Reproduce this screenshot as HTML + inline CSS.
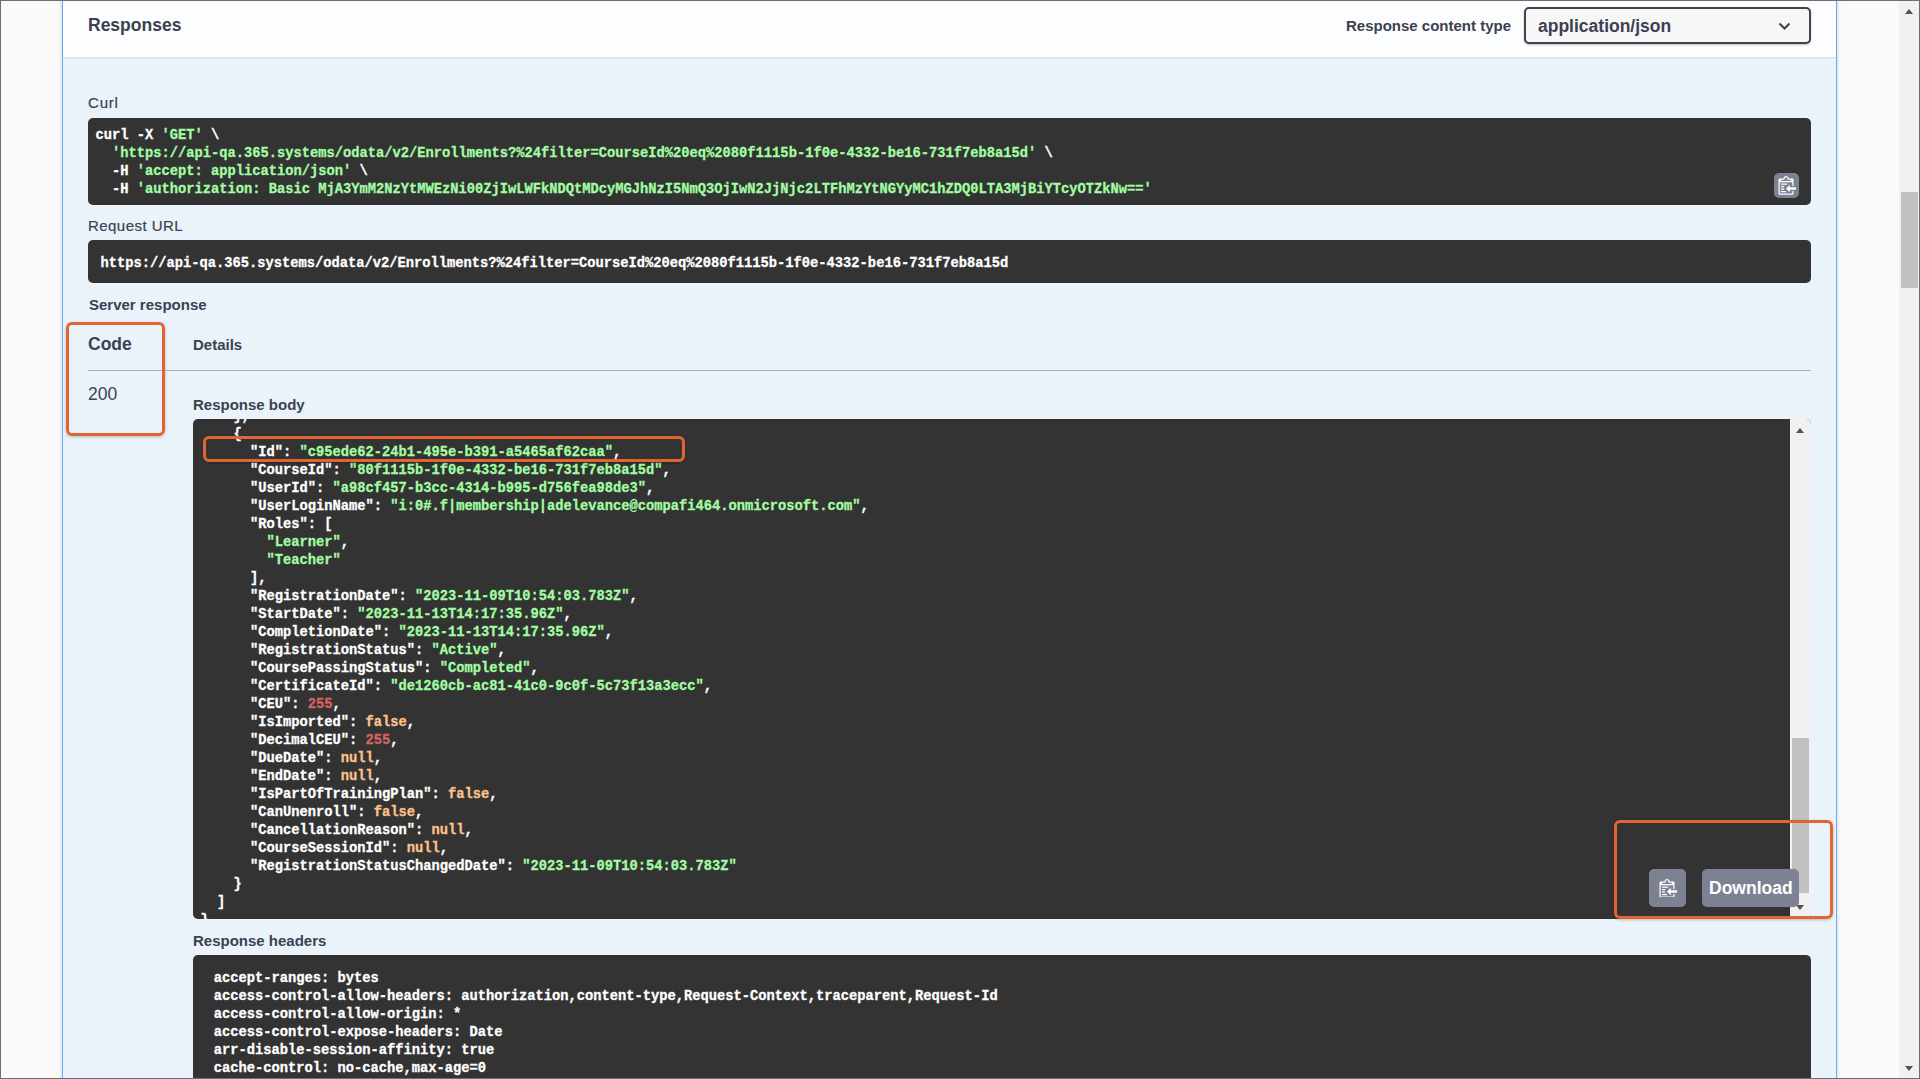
<!DOCTYPE html>
<html><head><meta charset="utf-8">
<style>
html,body{margin:0;padding:0;}
body{width:1920px;height:1079px;overflow:hidden;background:#fafafa;position:relative;font-family:"Liberation Sans",sans-serif;color:#3b4151;}
.abs{position:absolute;}
.frame{position:absolute;left:0;top:0;width:1920px;height:1079px;box-sizing:border-box;border:1px solid #6e6e6e;z-index:100;pointer-events:none;}
.opblock{position:absolute;left:62px;top:-20px;width:1773px;height:1200px;border:1px solid #61affe;background:#ebf3fa;box-shadow:0 0 3.75px rgba(0,0,0,.19);}
.hdr{position:absolute;left:63px;top:0;width:1773px;height:57px;background:#fbfdfe;box-shadow:0 1px 2px rgba(0,0,0,.1);}
.t{position:absolute;white-space:pre;line-height:0;}
.pre{position:absolute;background:#333;border-radius:5px;}
.mono{font-family:"Liberation Mono",monospace;font-weight:bold;font-size:13.75px;white-space:pre;color:#fff;-webkit-text-stroke:0.3px currentColor;}
.g{color:#a2fca2;}
.r{color:#d36363;}
.y{color:#fcc28c;}
.btn{position:absolute;background:#7d8293;border-radius:5px;}
.orange{position:absolute;box-sizing:border-box;border:3px solid #e26333;border-radius:6px;box-shadow:0 1px 3px rgba(0,0,0,.25);}
.sb{position:absolute;background:#f1f1f1;}
.thumb{position:absolute;background:#c1c1c1;}
.tri-up{position:absolute;width:0;height:0;border-left:4.5px solid transparent;border-right:4.5px solid transparent;border-bottom:5px solid #505050;}
.tri-dn{position:absolute;width:0;height:0;border-left:4.5px solid transparent;border-right:4.5px solid transparent;border-top:5px solid #505050;}
</style></head><body>
<div class="opblock"></div>
<div class="hdr"></div>

<!-- header -->
<div class="t" style="left:88px;top:25px;font-size:17.5px;font-weight:bold;">Responses</div>
<div class="t" style="left:1346px;top:26px;font-size:15px;font-weight:bold;">Response content type</div>
<div class="abs" style="left:1524px;top:7px;width:287px;height:37px;box-sizing:border-box;border:2.5px solid #41444e;border-radius:5px;background:#f7f7f7;box-shadow:0 1px 2px rgba(0,0,0,.25);"></div>
<div class="t" style="left:1538px;top:26px;font-size:17.5px;font-weight:bold;">application/json</div>
<svg class="abs" style="left:1777px;top:21px" width="15" height="10" viewBox="0 0 15 10"><path d="M2.5 2.5 L7.5 7.5 L12.5 2.5" fill="none" stroke="#3b4151" stroke-width="2"/></svg>

<!-- curl -->
<div class="t" style="left:88px;top:103px;font-size:15px;letter-spacing:0.8px;-webkit-text-stroke:0.2px #3b4151;">Curl</div>
<div class="pre" style="left:88px;top:118px;width:1723px;height:87px;"></div>
<div class="abs mono" style="left:95.5px;top:127px;line-height:18px;">curl -X <span class="g">'GET'</span> \
  <span class="g">'https://api-qa.365.systems/odata/v2/Enrollments?%24filter=CourseId%20eq%2080f1115b-1f0e-4332-be16-731f7eb8a15d'</span> \
  -H <span class="g">'accept: application/json'</span> \
  -H <span class="g">'authorization: Basic MjA3YmM2NzYtMWEzNi00ZjIwLWFkNDQtMDcyMGJhNzI5NmQ3OjIwN2JjNjc2LTFhMzYtNGYyMC1hZDQ0LTA3MjBiYTcyOTZkNw=='</span></div>
<div class="btn" style="left:1774px;top:173px;width:25px;height:25px;"></div>
<svg class="abs" style="left:1775.5px;top:176px" width="20" height="18.75" viewBox="0 0 16 15"><g transform="translate(2 -1)"><path fill="#fff" fill-rule="evenodd" d="M2 13h4v1H2v-1zm5-6H2v1h5V7zm2 3V8l-3 3 3 3v-2h5v-2H9zM4.5 9H2v1h2.5V9zM2 12h2.5v-1H2v1zm9 1h1v2c-.02.28-.11.52-.3.7-.19.18-.42.28-.7.3H1c-.55 0-1-.45-1-1V4c0-.55.45-1 1-1h3c0-1.11.89-2 2-2 1.11 0 2 .89 2 2h3c.55 0 1 .45 1 1v5h-1V6H1v9h10v-2zM2 5h8c0-.55-.45-1-1-1H8c-.55 0-1-.45-1-1s-.45-1-1-1-1 .45-1 1-.45 1-1 1H3c-.55 0-1 .45-1 1z"/></g></svg>

<!-- request url -->
<div class="t" style="left:88px;top:226px;font-size:15px;letter-spacing:0.45px;-webkit-text-stroke:0.2px #3b4151;">Request URL</div>
<div class="pre" style="left:88px;top:240px;width:1723px;height:43px;"></div>
<div class="abs mono" style="left:100.5px;top:255px;line-height:18px;">https://api-qa.365.systems/odata/v2/Enrollments?%24filter=CourseId%20eq%2080f1115b-1f0e-4332-be16-731f7eb8a15d</div>

<!-- server response -->
<div class="t" style="left:89px;top:305px;font-size:15px;font-weight:bold;">Server response</div>
<div class="t" style="left:88px;top:344px;font-size:17.5px;font-weight:bold;">Code</div>
<div class="t" style="left:193px;top:345px;font-size:15px;font-weight:bold;">Details</div>
<div class="abs" style="left:88px;top:370px;width:1723px;height:1px;background:#abb2bf;"></div>
<div class="t" style="left:88px;top:394px;font-size:17.5px;">200</div>
<div class="t" style="left:193px;top:405px;font-size:15px;font-weight:bold;">Response body</div>

<!-- response body -->
<div class="abs" style="left:193px;top:419px;width:1618px;height:500px;border-radius:5px;overflow:hidden;background:#333;">
<div class="abs mono" style="left:7.5px;top:-11px;line-height:18px;">    },
    {
      "Id": <span class="g">"c95ede62-24b1-495e-b391-a5465af62caa"</span>,
      "CourseId": <span class="g">"80f1115b-1f0e-4332-be16-731f7eb8a15d"</span>,
      "UserId": <span class="g">"a98cf457-b3cc-4314-b995-d756fea98de3"</span>,
      "UserLoginName": <span class="g">"i:0#.f|membership|adelevance@compafi464.onmicrosoft.com"</span>,
      "Roles": [
        <span class="g">"Learner"</span>,
        <span class="g">"Teacher"</span>
      ],
      "RegistrationDate": <span class="g">"2023-11-09T10:54:03.783Z"</span>,
      "StartDate": <span class="g">"2023-11-13T14:17:35.96Z"</span>,
      "CompletionDate": <span class="g">"2023-11-13T14:17:35.96Z"</span>,
      "RegistrationStatus": <span class="g">"Active"</span>,
      "CoursePassingStatus": <span class="g">"Completed"</span>,
      "CertificateId": <span class="g">"de1260cb-ac81-41c0-9c0f-5c73f13a3ecc"</span>,
      "CEU": <span class="r">255</span>,
      "IsImported": <span class="y">false</span>,
      "DecimalCEU": <span class="r">255</span>,
      "DueDate": <span class="y">null</span>,
      "EndDate": <span class="y">null</span>,
      "IsPartOfTrainingPlan": <span class="y">false</span>,
      "CanUnenroll": <span class="y">false</span>,
      "CancellationReason": <span class="y">null</span>,
      "CourseSessionId": <span class="y">null</span>,
      "RegistrationStatusChangedDate": <span class="g">"2023-11-09T10:54:03.783Z"</span>
    }
  ]
}</div>
<div class="sb" style="left:1597px;top:0;width:21px;height:500px;"></div>
<div class="thumb" style="left:1599px;top:319px;width:17px;height:155px;"></div>
<div class="tri-up" style="left:1603px;top:9px;"></div>
<div class="tri-dn" style="left:1603px;top:486px;"></div>
</div>
<div class="btn" style="left:1649px;top:869px;width:37px;height:38px;"></div>
<svg class="abs" style="left:1656.5px;top:878.6px" width="20" height="18.75" viewBox="0 0 16 15"><g transform="translate(2 -1)"><path fill="#fff" fill-rule="evenodd" d="M2 13h4v1H2v-1zm5-6H2v1h5V7zm2 3V8l-3 3 3 3v-2h5v-2H9zM4.5 9H2v1h2.5V9zM2 12h2.5v-1H2v1zm9 1h1v2c-.02.28-.11.52-.3.7-.19.18-.42.28-.7.3H1c-.55 0-1-.45-1-1V4c0-.55.45-1 1-1h3c0-1.11.89-2 2-2 1.11 0 2 .89 2 2h3c.55 0 1 .45 1 1v5h-1V6H1v9h10v-2zM2 5h8c0-.55-.45-1-1-1H8c-.55 0-1-.45-1-1s-.45-1-1-1-1 .45-1 1-.45 1-1 1H3c-.55 0-1 .45-1 1z"/></g></svg>
<div class="btn" style="left:1702px;top:869px;width:97px;height:38px;"></div>
<div class="t" style="left:1709px;top:888px;font-size:17.5px;font-weight:bold;color:#fff;">Download</div>

<!-- response headers -->
<div class="t" style="left:193px;top:941px;font-size:15px;font-weight:bold;">Response headers</div>
<div class="pre" style="left:193px;top:955px;width:1618px;height:200px;"></div>
<div class="abs mono" style="left:205.5px;top:970px;line-height:18px;"> accept-ranges: bytes
 access-control-allow-headers: authorization,content-type,Request-Context,traceparent,Request-Id
 access-control-allow-origin: *
 access-control-expose-headers: Date
 arr-disable-session-affinity: true
 cache-control: no-cache,max-age=0</div>

<!-- orange annotations -->
<div class="orange" style="left:66px;top:322px;width:99px;height:114px;"></div>
<div class="orange" style="left:203px;top:436px;width:482px;height:26px;"></div>
<div class="orange" style="left:1614px;top:820px;width:219px;height:99px;"></div>

<!-- page scrollbar -->
<div class="sb" style="left:1899px;top:1px;width:20px;height:1077px;"></div>
<div class="thumb" style="left:1901px;top:192px;width:17px;height:96px;"></div>
<div class="tri-up" style="left:1905px;top:9px;"></div>
<div class="tri-dn" style="left:1905px;top:1066px;"></div>

<div class="frame"></div>
</body></html>
